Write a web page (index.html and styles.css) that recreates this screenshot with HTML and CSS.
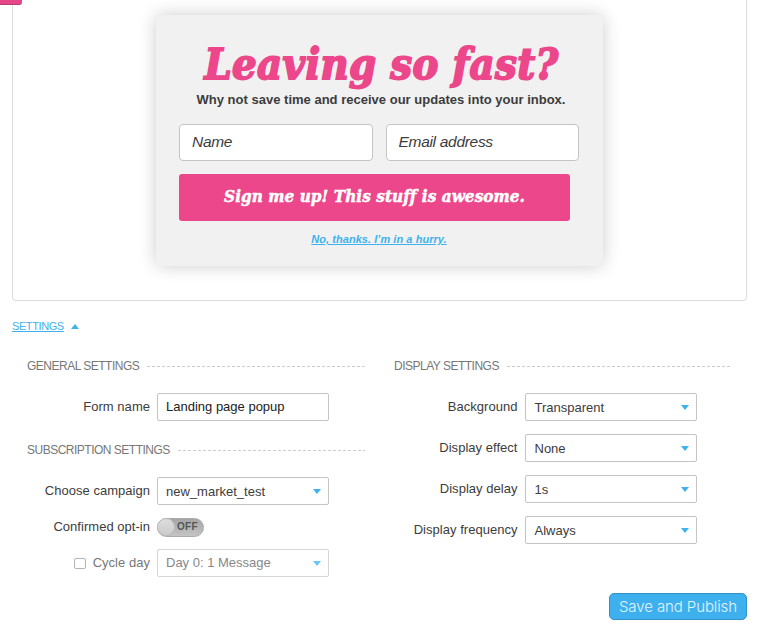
FILE: index.html
```html
<!DOCTYPE html>
<html lang="en">
<head>
<meta charset="utf-8">
<title>Form settings</title>
<link rel="stylesheet" href="styles.css">
</head>
<body>
<main class="page">
  <section class="preview">
    <span class="tab"></span>
    <div class="popup">
      <h1 class="popup-title"><span>Leaving so fast?</span></h1>
      <p class="popup-lead"><span>Why not save time and receive our updates into your inbox.</span></p>
      <div class="popup-fields">
        <div class="popup-input"><span class="t-name">Name</span></div>
        <div class="popup-input"><span class="t-email">Email address</span></div>
      </div>
      <div class="popup-submit"><span>Sign me up! This stuff is awesome.</span></div>
      <a class="popup-dismiss"><span>No, thanks. I’m in a hurry.</span></a>
    </div>
  </section>

  <div class="toggle-row"><a class="settings-link">SETTINGS</a><svg class="up" viewBox="0 0 8 5"><path d="M0 5 4 0 8 5Z"/></svg></div>

  <div class="columns">
    <section class="column">
      <h2 class="heading"><span>GENERAL SETTINGS</span><svg class="rule"><line x1="0" y1=".5" x2="100%" y2=".5"/></svg></h2>
      <div class="row"><label>Form name</label><div class="field text">Landing page popup</div></div>
      <h2 class="heading second"><span>SUBSCRIPTION SETTINGS</span><svg class="rule"><line x1="0" y1=".5" x2="100%" y2=".5"/></svg></h2>
      <div class="row"><label>Choose campaign</label><div class="field"><span>new_market_test</span><svg class="down" viewBox="0 0 8 5"><path d="M0 0H8L4 5Z"/></svg></div></div>
      <div class="row switch-row"><label>Confirmed opt-in</label><div class="switch"><i class="knob"></i><b>OFF</b></div></div>
      <div class="row disabled"><label><i class="check"></i>Cycle day</label><div class="field"><span class="t-day">Day 0: 1 Message</span><svg class="down" viewBox="0 0 8 5"><path d="M0 0H8L4 5Z"/></svg></div></div>
    </section>
    <section class="column display">
      <h2 class="heading"><span>DISPLAY SETTINGS</span><svg class="rule"><line x1="0" y1=".5" x2="100%" y2=".5"/></svg></h2>
      <div class="row"><label>Background</label><div class="field"><span>Transparent</span><svg class="down" viewBox="0 0 8 5"><path d="M0 0H8L4 5Z"/></svg></div></div>
      <div class="row"><label>Display effect</label><div class="field"><span>None</span><svg class="down" viewBox="0 0 8 5"><path d="M0 0H8L4 5Z"/></svg></div></div>
      <div class="row"><label>Display delay</label><div class="field"><span>1s</span><svg class="down" viewBox="0 0 8 5"><path d="M0 0H8L4 5Z"/></svg></div></div>
      <div class="row"><label>Display frequency</label><div class="field"><span>Always</span><svg class="down" viewBox="0 0 8 5"><path d="M0 0H8L4 5Z"/></svg></div></div>
    </section>
  </div>
  <div class="actions"><div class="save">Save and Publish</div></div>
</main>
</body>
</html>
```
FILE: styles.css
```css
* { box-sizing: border-box; }
body { margin: 0; background: #fff; color: #3c3c3c; font: 13px/16px "Liberation Sans", Arial, sans-serif; }
h1, h2, p { margin: 0; font-weight: normal; }
.page { width: 762px; height: 631px; overflow: hidden; padding: 0 15px 0 12px; }
.preview { position: relative; height: 301px; border: 1px solid #dcdcdc; border-top: 0; border-radius: 0 0 4px 4px; padding: 15px 0 0 143px; }
.tab { position: absolute; left: -13px; top: 0; width: 22px; height: 5px; background: #e64789; border-bottom: 1px solid #b93b70; border-radius: 0 0 3px 0; }
.popup { width: 447px; height: 251px; background: #f1f1f1; border-radius: 6px; box-shadow: 0 0 18px rgba(0,0,0,.2); padding: 0 24px 0 23px; display: flex; flex-direction: column; white-space: nowrap; }
.popup-title { margin-top: 22px; height: 55px; font: italic bold 43px/55px "DejaVu Serif Condensed", "DejaVu Serif", serif; font-stretch: condensed; color: #ec478b; text-align: center; letter-spacing: .4px; -webkit-text-stroke: 1.8px #ec478b; padding-left: 5px; }
.popup-lead { height: 16px; font-size: 13px; font-weight: bold; text-align: center; letter-spacing: .01px; padding-left: 4px; }
.popup-fields { display: flex; gap: 13px; margin-top: 16px; }
.popup-input { flex: 1; height: 37px; background: #fff; border: 1px solid #c4c4c4; border-radius: 4px; padding: 0 12px; font: italic 15.5px/34px "Liberation Sans", sans-serif; letter-spacing: -.3px; }
.popup-submit { margin-top: 13px; width: 391px; height: 47px; background: #ec478b; color: #fff; border-radius: 3px; text-align: center; font: italic bold 17px/45px "DejaVu Serif Condensed", "DejaVu Serif", serif; font-stretch: condensed; letter-spacing: .05px; -webkit-text-stroke: .5px #fff; }
.popup-dismiss { margin-top: 11px; text-align: center; font: italic bold 11px/14px "Liberation Sans", sans-serif; letter-spacing: .05px; color: #3db2ec; text-decoration: underline; }
.toggle-row { display: flex; align-items: center; gap: 7px; height: 16px; margin-top: 17px; color: #3db2ec; font-size: 11px; letter-spacing: -.4px; }
.settings-link { text-decoration: underline; }
.up, .down { width: 8px; height: 5px; fill: #3db2ec; flex: none; }
.columns { display: flex; gap: 29px; padding-left: 15px; margin-top: 24px; height: 235px; }
.column { width: 338px; }
.heading { display: flex; align-items: center; gap: 8px; height: 16px; font-size: 12px; letter-spacing: -.5px; color: #777; white-space: nowrap; margin-bottom: 19px; }
.rule { flex: 1; min-width: 0; height: 1px; stroke: #ccc; stroke-width: 1; stroke-dasharray: 3 2; }
.second { margin-top: 21px; }
.row { display: flex; align-items: center; gap: 7px; height: 28px; }
.row label { width: 123px; text-align: right; white-space: nowrap; letter-spacing: .03px; }
.field { width: 172px; height: 28px; border: 1px solid #c4c4c4; border-radius: 2px; padding: 1px 7px 0 8px; display: flex; align-items: center; justify-content: space-between; }
.text { padding-top: 0; color: #222; }
.switch-row { margin: 8px 0; }
.switch { width: 47px; height: 19px; border-radius: 10px; display: flex; align-items: center; gap: 2px; background: linear-gradient(#a5a5a5, #c4c4c4); border: 1px solid #aaa; font-size: 10px; letter-spacing: .3px; color: #555; }
.knob { width: 18px; height: 18px; margin-left: -1px; border-radius: 50%; background: linear-gradient(#ddd, #ccc); border: 1px solid #bbb; }
.disabled { color: #888; }
.disabled .field { border-color: #d6d6d6; padding-top: 0; }
.disabled .down { fill: #65c9f4; }
.disabled label { display: flex; align-items: center; justify-content: flex-end; gap: 7px; color: #777; }
.check { width: 12px; height: 11px; border: 1px solid #b5b5b5; border-radius: 2px; }
.display .row { margin-bottom: 13px; }
.display .row label { width: 123.5px; }
.display .field { padding-left: 9px; }
.actions { display: flex; justify-content: flex-end; }
.save { width: 138px; height: 27px; background: #3eb0ee; border: 1px solid #3293cb; border-radius: 5px; color: #e1f4ff; text-align: center; font: 300 15px/25px Inter, sans-serif; letter-spacing: -.1px; white-space: nowrap; }
```
